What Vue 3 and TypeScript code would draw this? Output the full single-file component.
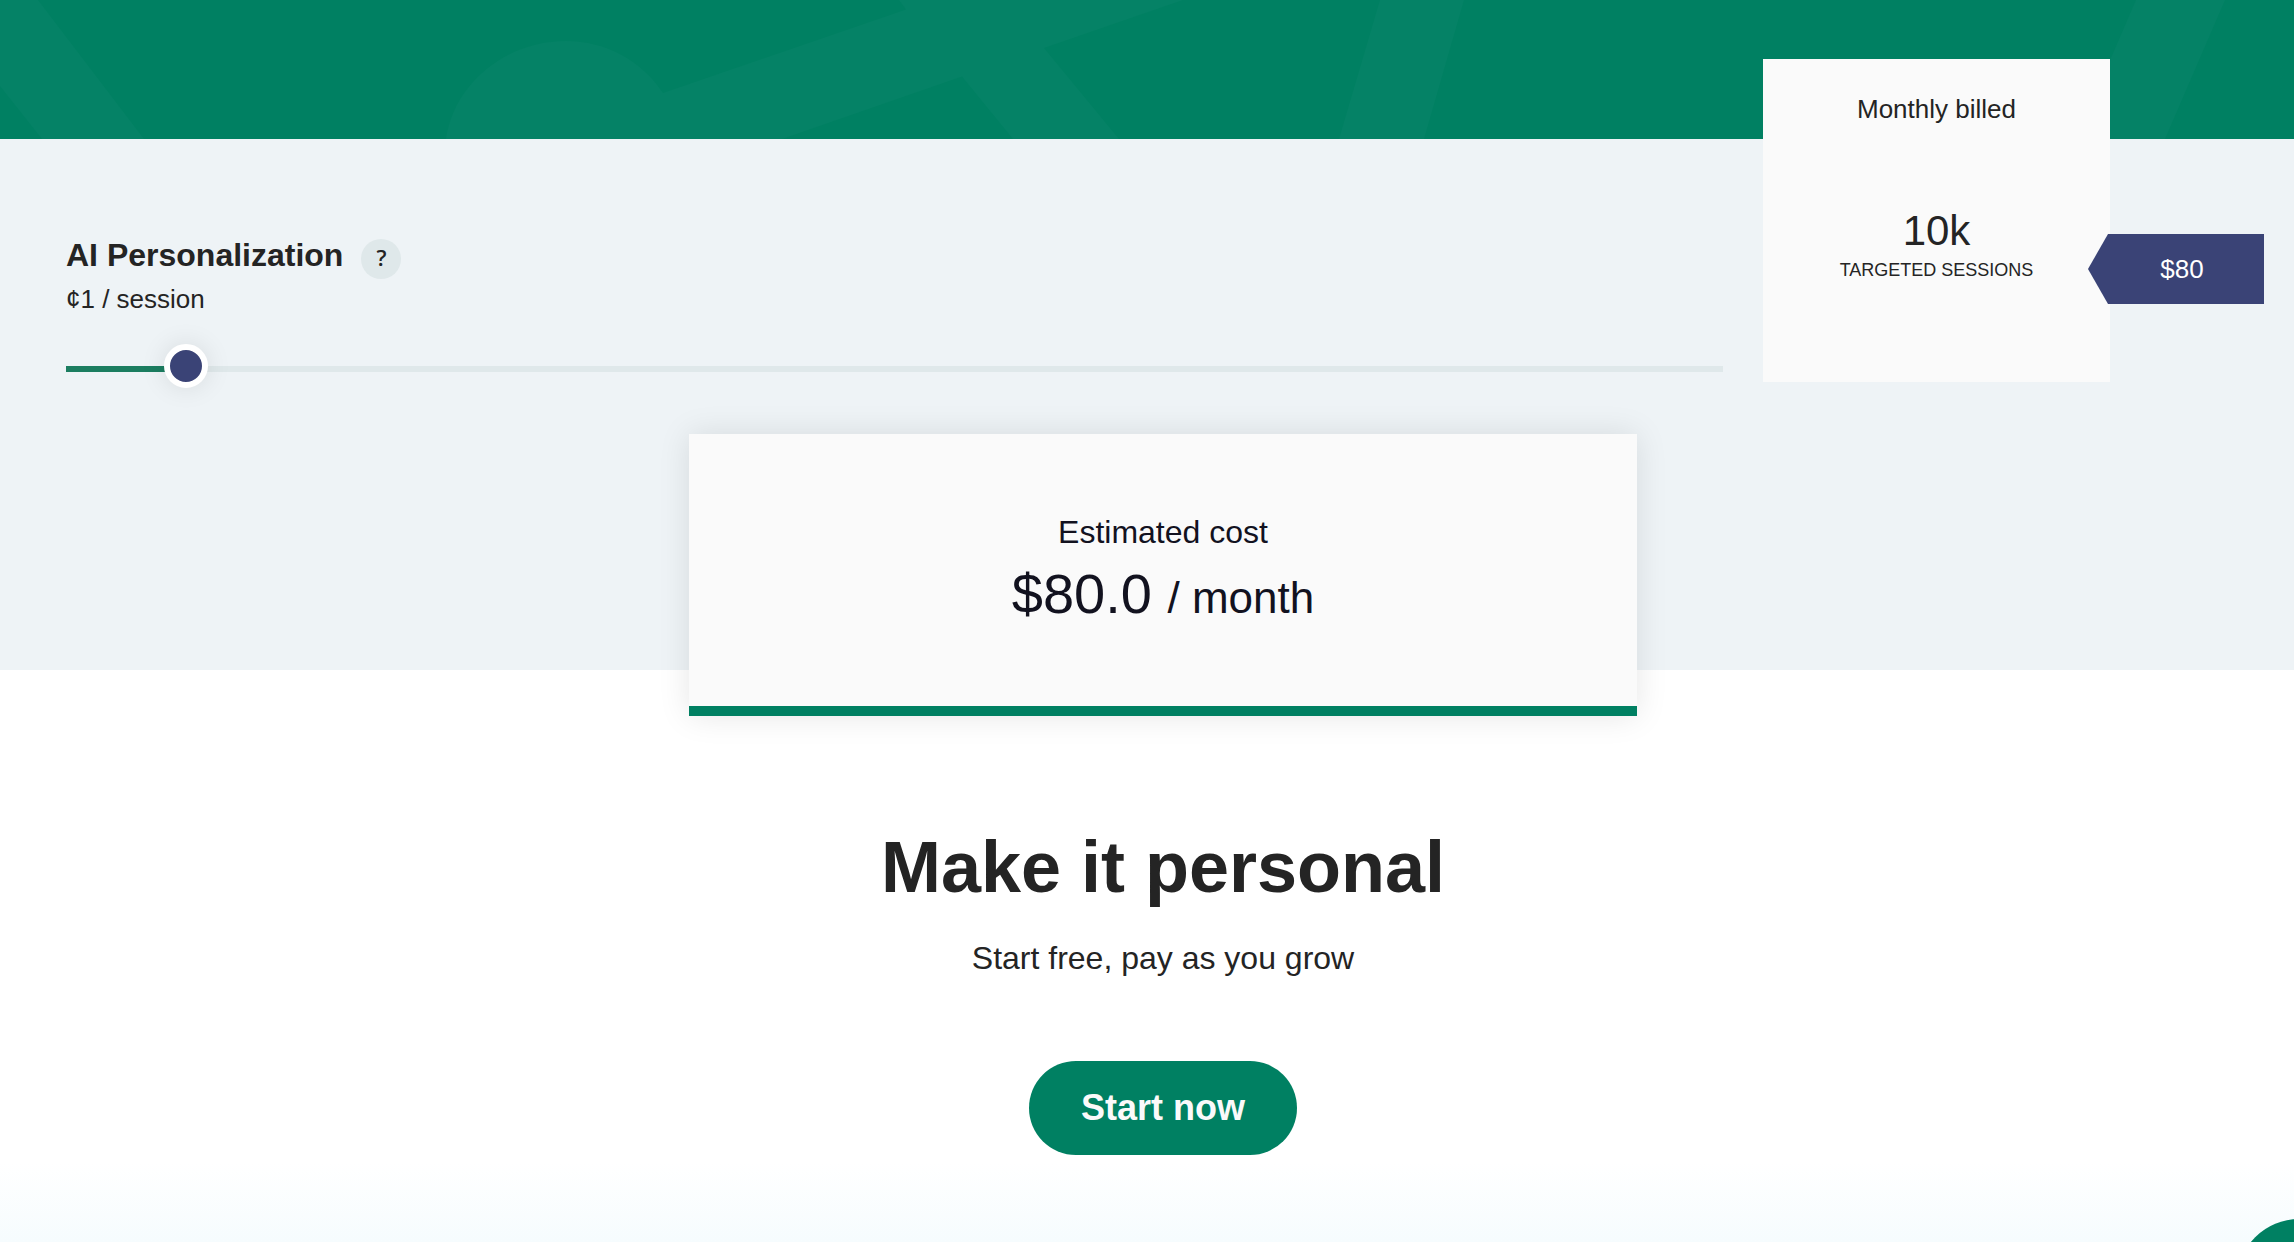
<script setup lang="ts">
import { computed, ref } from 'vue'

const MAX_SESSIONS = 165
const FREE_SESSIONS = 2
const PRICE_PER_THOUSAND = 10
const THUMB_SIZE = 44

// Targeted sessions, in thousands
const sessions = ref<number>(10)

const cost = computed<number>(() => Math.max(0, sessions.value - FREE_SESSIONS) * PRICE_PER_THOUSAND)
const fill = computed<string>(() => {
  const ratio = sessions.value / MAX_SESSIONS
  return `calc(${THUMB_SIZE / 2}px + (100% - ${THUMB_SIZE}px) * ${ratio})`
})
</script>

<template>
  <div class="page">
    <header class="hero">
      <svg class="hero-pattern" viewBox="0 0 2294 139" preserveAspectRatio="none" aria-hidden="true">
        <path
          fill="#058266"
          d="M0 0H38L144 139H42L0 86Z
             M446 139C454 84 505 41 566 41C606 41 642 61 663 93L906 9.500L899 0H1183L1044 48L1119 139H1013L962 76.500L782 139Z
             M1380 0H1464L1424 139H1339Z
             M2136 0H2225L2165 139H2076Z"
        />
      </svg>
    </header>

    <main>
      <section class="calculator">
        <div class="plan">
          <div class="product">
            <div class="product-head">
              <label class="product-name" for="sessions">AI Personalization</label>
              <button class="help" type="button" aria-label="About AI Personalization">?</button>
            </div>
            <p class="rate">¢1 / session</p>
            <input
              id="sessions"
              v-model.number="sessions"
              class="slider"
              type="range"
              min="0"
              :max="MAX_SESSIONS"
              :style="{ '--fill': fill }"
            />
          </div>

          <div class="billing">
            <h2 class="billing-title">Monthly billed</h2>
            <p class="billing-count">{{ sessions }}k</p>
            <p class="billing-unit">TARGETED SESSIONS</p>
            <span class="price-tag">${{ cost }}</span>
          </div>
        </div>

        <div class="estimate">
          <p class="estimate-label">Estimated cost</p>
          <p class="estimate-price">${{ cost.toFixed(1) }} <span class="estimate-period">/ month</span></p>
        </div>
      </section>

      <section class="cta">
        <h1 class="cta-title">Make it personal</h1>
        <p class="cta-text">Start free, pay as you grow</p>
        <button class="cta-button" type="button">Start now</button>
      </section>
    </main>

    <button class="chat" type="button" aria-label="Open chat"></button>
  </div>
</template>

<style>
body {
  margin: 0;
  background: #fff;
}
</style>

<style scoped>
.page {
  font-family: "Liberation Sans", Arial, sans-serif;
  font-size: 26px;
  line-height: 32px;
  color: #242424;
}

h1,
h2,
p {
  margin: 0;
  font-weight: 400;
}

button {
  padding: 0;
  border: 0;
  font-family: inherit;
  cursor: pointer;
}

.hero {
  height: 139px;
  background: #008062;
}

.hero-pattern {
  display: block;
  width: 100%;
  height: 100%;
}

.calculator {
  display: flex;
  flex-direction: column;
  padding-left: 32px;
  background: #eef3f6;
}

.plan {
  display: flex;
  align-items: flex-start;
  gap: 40px;
  padding: 0 184px 0 34px;
}

.product {
  flex: 1;
  min-width: 0;
  padding-top: 96px;
}

.product-head {
  display: flex;
  align-items: flex-start;
  gap: 18px;
}

.product-name {
  font-size: 32px;
  line-height: 40px;
  font-weight: 700;
}

.help {
  width: 40px;
  height: 40px;
  margin-top: 4px;
  padding-bottom: 4px;
  border-radius: 50%;
  background: #dfe8ea;
  color: #242424;
  font-family: "Open Sans", sans-serif;
  font-size: 22px;
  line-height: 36px;
  font-weight: 600;
}

.rate {
  margin-top: 4px;
}

.slider {
  display: block;
  width: 100%;
  height: 50px;
  margin: 29px 0 0;
  appearance: none;
  background: transparent;
  cursor: pointer;
}

.slider::-webkit-slider-runnable-track {
  height: 6px;
  background: linear-gradient(to right, #1b7d60 var(--fill), #dfe8ea var(--fill));
}

.slider::-webkit-slider-thumb {
  appearance: none;
  box-sizing: border-box;
  width: 44px;
  height: 44px;
  margin-top: -22px;
  border: 6px solid #fff;
  border-radius: 50%;
  background: #3a4376;
  box-shadow: 0 0 26px rgba(0, 0, 0, 0.1);
}

.billing {
  position: relative;
  flex: none;
  width: 347px;
  margin-top: -80px;
  padding: 34px 0 100px;
  box-sizing: border-box;
  background: #fafafa;
  text-align: center;
}

.billing-title {
  font-size: 26px;
}

.billing-count {
  margin-top: 82px;
  font-size: 42px;
  line-height: 48px;
}

.billing-unit {
  margin-top: 3px;
  font-size: 18px;
  line-height: 24px;
}

.price-tag {
  position: absolute;
  top: 175px;
  right: -154px;
  width: 176px;
  padding-left: 12px;
  box-sizing: border-box;
  background: #3a4376;
  clip-path: polygon(0 50%, 20px 0, 100% 0, 100% 100%, 20px 100%);
  color: #fff;
  line-height: 70px;
}

.estimate {
  position: relative;
  align-self: center;
  width: 948px;
  max-width: 100%;
  margin: 40px 0 -46px;
  padding: 78px 0 80px;
  box-sizing: border-box;
  border-bottom: 10px solid #008062;
  background: #fafafa;
  box-shadow: 0 0 30px rgba(0, 0, 0, 0.1);
  color: #12121f;
  text-align: center;
}

.estimate-label {
  font-size: 32px;
  line-height: 40px;
}

.estimate-price {
  margin-top: 10px;
  font-size: 56px;
  line-height: 64px;
}

.estimate-period {
  font-size: 44px;
  line-height: 44px;
}

.cta {
  display: flex;
  flex-direction: column;
  align-items: center;
  padding: 155px 0 87px 32px;
  background: linear-gradient(to top, #f6fcfe, #fff 80px);
}

.cta-title {
  font-size: 72px;
  line-height: 84px;
  font-weight: 700;
}

.cta-text {
  margin-top: 29px;
  font-size: 32px;
  line-height: 40px;
}

.cta-button {
  margin-top: 83px;
  padding: 0 52px;
  border-radius: 47px;
  background: #008062;
  color: #fafafa;
  font-size: 36px;
  line-height: 94px;
  font-weight: 700;
}

.chat {
  position: fixed;
  right: -67px;
  bottom: -101px;
  width: 124px;
  height: 124px;
  border-radius: 50%;
  background: #008062;
}
</style>
